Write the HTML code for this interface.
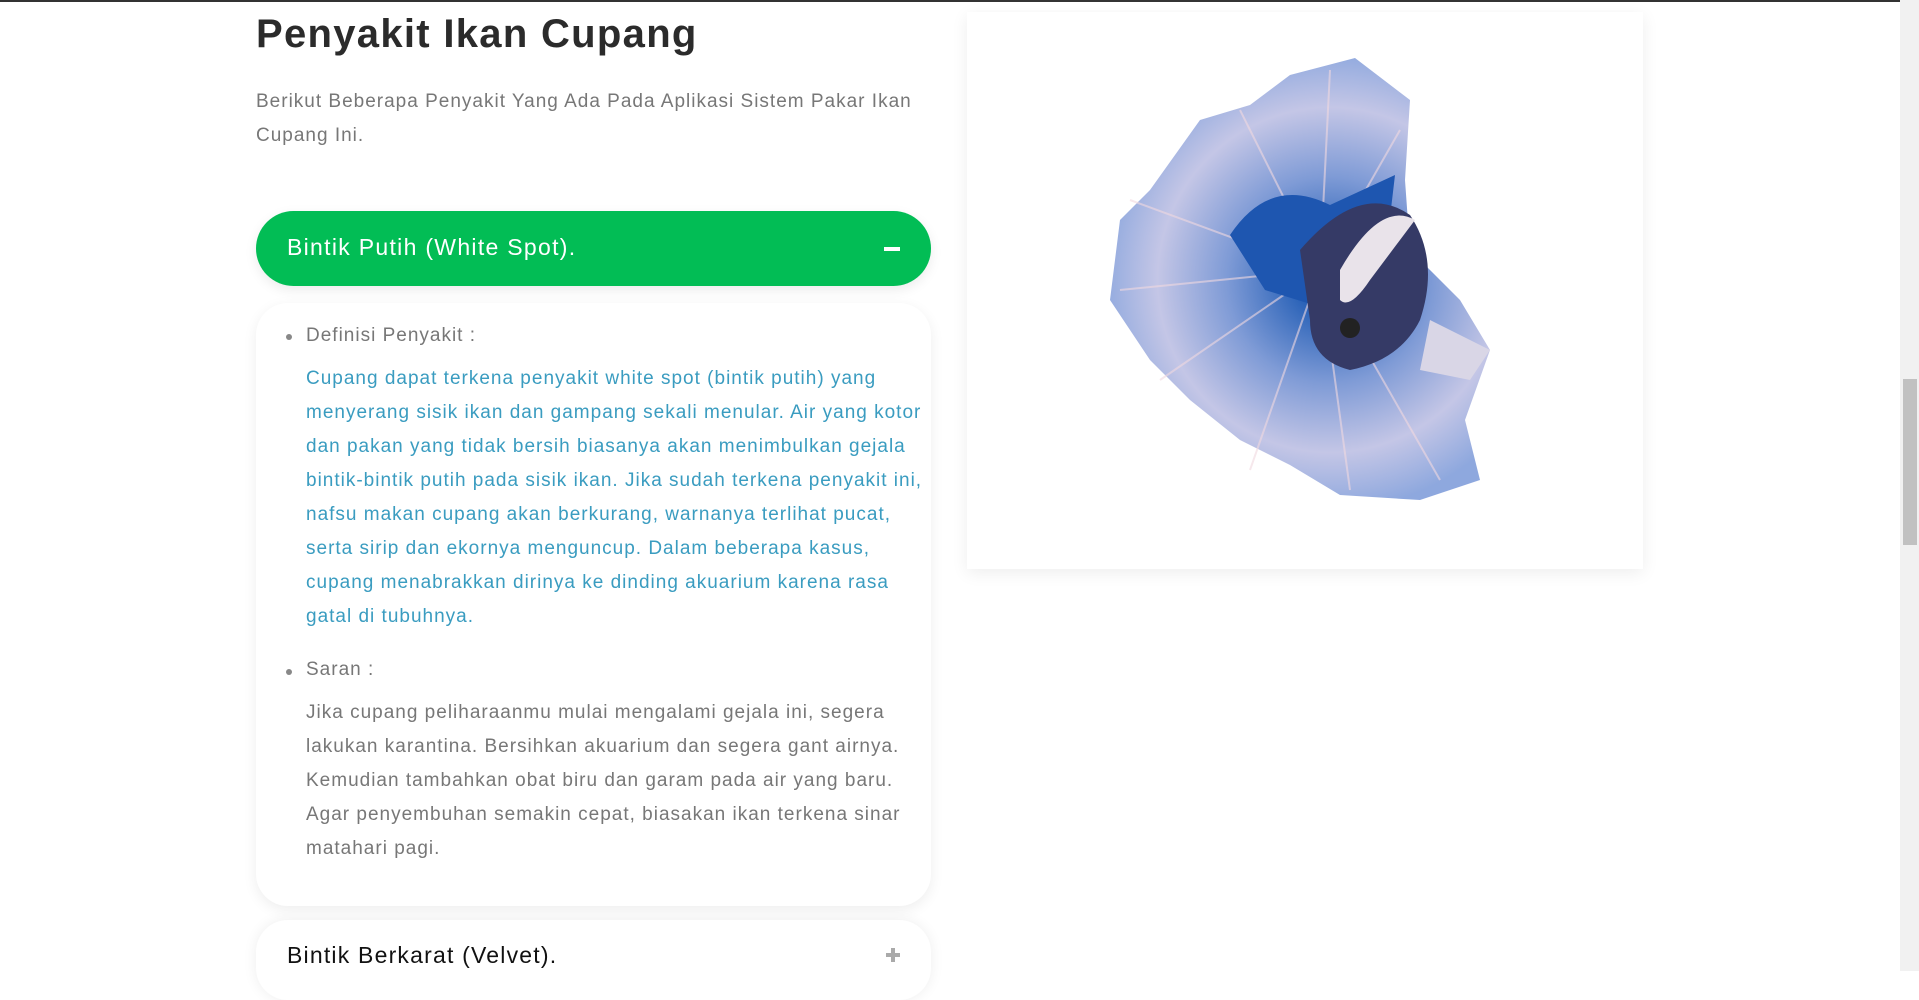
<!DOCTYPE html>
<html><head><meta charset="utf-8"><style>
html,body{margin:0;padding:0;background:#fff;width:1919px;height:971px;overflow:hidden;font-family:"Liberation Sans",sans-serif;}
.topline{position:absolute;left:0;top:0;width:1919px;height:2px;background:#333;}
h1{position:absolute;left:256px;top:12px;margin:0;font-size:40px;font-weight:bold;color:#2b2b2b;letter-spacing:1.3px;}
.intro{position:absolute;left:256px;top:85px;font-size:19px;letter-spacing:1.0px;line-height:34px;color:#777;margin:0;white-space:nowrap;}
.bar{position:absolute;left:256px;top:211px;width:675px;height:75px;border-radius:38px;background:#02bd55;box-shadow:0 4px 12px rgba(0,0,0,.08);}
.bar span{position:absolute;left:31px;top:23px;font-size:23px;letter-spacing:1.3px;color:#fff;}
.bar i{position:absolute;left:628px;top:36px;width:16px;height:4px;background:#fff;}
.card{position:absolute;left:256px;top:303px;width:675px;height:603px;border-radius:32px;background:#fff;box-shadow:0 4px 14px rgba(0,0,0,.07);}
.card2{position:absolute;left:256px;top:920px;width:675px;height:80px;border-radius:32px;background:#fff;box-shadow:0 0 14px rgba(0,0,0,.07);}
.card2 span{position:absolute;left:31px;top:22px;font-size:23px;letter-spacing:1.2px;color:#111;}
.card2 .p1{position:absolute;left:630px;top:33px;width:14px;height:4px;background:#aaa;}
.card2 .p2{position:absolute;left:635px;top:28px;width:4px;height:14px;background:#aaa;}
.li{position:absolute;left:306px;font-size:19px;letter-spacing:1.0px;color:#777;}
.dot{position:absolute;left:286px;width:6px;height:6px;border-radius:50%;background:#888;}
.txt{position:absolute;left:306px;font-size:19px;letter-spacing:1.0px;line-height:34px;margin:0;white-space:nowrap;}
.imgcard{position:absolute;left:967px;top:12px;width:676px;height:557px;background:#fff;box-shadow:0 4px 16px rgba(0,0,0,.07);}
.sb{position:absolute;left:1900px;top:0;width:19px;height:971px;background:#f1f1f1;}
.thumb{position:absolute;left:1903px;top:379px;width:14px;height:166px;background:#c1c1c1;}
</style></head><body>
<div class="topline"></div>
<h1>Penyakit Ikan Cupang</h1>
<p class="intro">Berikut Beberapa Penyakit Yang Ada Pada Aplikasi Sistem Pakar Ikan<br>Cupang Ini.</p>
<div class="bar"><span>Bintik Putih (White Spot).</span><i></i></div>
<div class="card"></div>
<div class="dot" style="top:334px"></div><div class="li" style="top:325px">Definisi Penyakit :</div>
<p class="txt" style="top:362px;color:#3a9cc0">Cupang dapat terkena penyakit white spot (bintik putih) yang<br>menyerang sisik ikan dan gampang sekali menular. Air yang kotor<br>dan pakan yang tidak bersih biasanya akan menimbulkan gejala<br>bintik-bintik putih pada sisik ikan. Jika sudah terkena penyakit ini,<br>nafsu makan cupang akan berkurang, warnanya terlihat pucat,<br>serta sirip dan ekornya menguncup. Dalam beberapa kasus,<br>cupang menabrakkan dirinya ke dinding akuarium karena rasa<br>gatal di tubuhnya.</p>
<div class="dot" style="top:669px"></div><div class="li" style="top:659px">Saran :</div>
<p class="txt" style="top:696px;color:#777">Jika cupang peliharaanmu mulai mengalami gejala ini, segera<br>lakukan karantina. Bersihkan akuarium dan segera gant airnya.<br>Kemudian tambahkan obat biru dan garam pada air yang baru.<br>Agar penyembuhan semakin cepat, biasakan ikan terkena sinar<br>matahari pagi.</p>
<div class="card2"><span>Bintik Berkarat (Velvet).</span><i class="p1"></i><i class="p2"></i></div>
<div class="imgcard"></div>
<svg style="position:absolute;left:0;top:0" width="1919" height="971">
<defs>
<radialGradient id="fin" cx="1330" cy="280" r="230" gradientUnits="userSpaceOnUse">
<stop offset="0.15" stop-color="#2b63b8"/><stop offset="0.45" stop-color="#7f9bd6"/><stop offset="0.75" stop-color="#c4c6e6"/><stop offset="1" stop-color="#8ea8de"/></radialGradient>
</defs>
<path d="M1150 190 L1200 120 L1250 105 L1290 75 L1355 58 L1410 100 L1405 180 L1410 250 L1460 300 L1490 350 L1465 420 L1480 480 L1420 500 L1340 495 L1290 465 L1240 440 L1190 400 L1150 360 L1110 300 L1120 220 Z" fill="url(#fin)"/>
<g stroke="#f1d9e0" stroke-width="2" opacity="0.6" fill="none">
<path d="M1320 270 L1130 200"/><path d="M1320 270 L1120 290"/><path d="M1320 270 L1160 380"/><path d="M1320 270 L1250 470"/><path d="M1320 270 L1350 490"/><path d="M1320 270 L1440 480"/><path d="M1320 270 L1240 110"/><path d="M1320 270 L1330 70"/><path d="M1320 270 L1400 130"/>
</g>
<path d="M1230 235 Q1270 175 1330 205 L1395 175 L1385 260 L1330 310 L1265 290 Z" fill="#1e56b0"/>
<path d="M1300 250 Q1360 180 1410 215 Q1440 260 1420 320 Q1400 360 1350 370 Q1310 360 1310 320 Z" fill="#353a66"/>
<path d="M1340 270 Q1380 200 1415 220 Q1400 240 1370 280 Q1350 310 1340 300 Z" fill="#e9e3ea"/>
<circle cx="1350" cy="328" r="10" fill="#222"/>
<path d="M1430 320 L1490 350 L1470 380 L1420 370 Z" fill="#d9d6e6"/>
</svg>
<div class="sb"></div><div class="thumb"></div>
</body></html>
